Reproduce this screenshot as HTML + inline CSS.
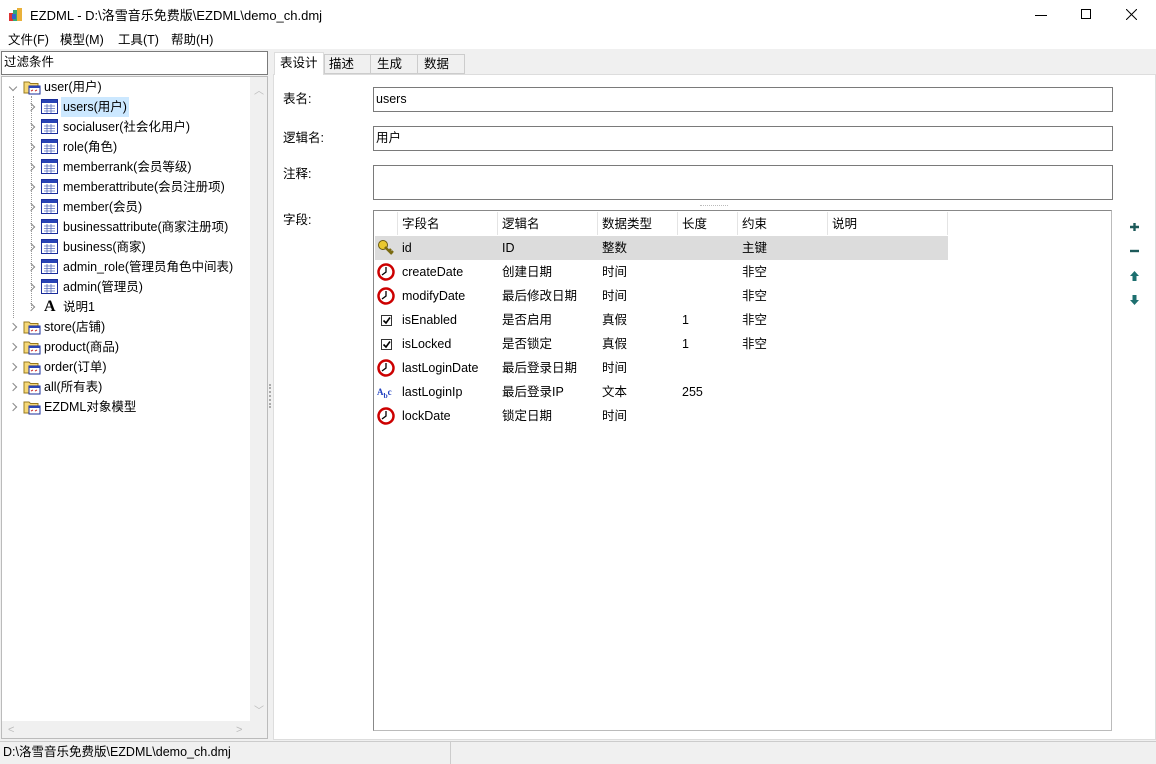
<!DOCTYPE html>
<html><head><meta charset="utf-8"><style>
*{margin:0;padding:0;box-sizing:border-box}
body{width:1156px;height:764px;background:#f0f0f0;font-family:"Liberation Sans","Noto Sans CJK SC",sans-serif;font-size:12.5px;color:#000;position:relative;overflow:hidden}
.a{position:absolute;white-space:nowrap;line-height:15px}
.tr{position:absolute;height:20px;line-height:20px;white-space:nowrap}
.ex{position:absolute;width:6px;height:6px;border-right:1.3px solid #888;border-bottom:1.3px solid #888}
.cell{position:absolute;height:24px;line-height:24px;white-space:nowrap}
</style></head><body>
<!-- title -->
<div class="a" style="left:0;top:0;width:1156px;height:49px;background:#fff"></div>
<svg class="a" style="left:9px;top:8px" width="14" height="14"><rect x="0" y="5" width="5" height="8" fill="#d33"/><rect x="4" y="2" width="5" height="11" fill="#3a7"/><rect x="8" y="0" width="5" height="13" fill="#e9b13a"/><rect x="3" y="6" width="4" height="5" fill="#36c"/></svg>
<div class="a" style="left:30px;top:8px;font-size:13px">EZDML - D:\洛雪音乐免费版\EZDML\demo_ch.dmj</div>
<div class="a" style="left:1035px;top:15px;width:12px;height:1px;background:#000"></div>
<div class="a" style="left:1081px;top:9px;width:10px;height:10px;border:1px solid #000"></div>
<svg class="a" style="left:1126px;top:9px" width="11" height="11"><path d="M0 0L11 11M11 0L0 11" stroke="#000" stroke-width="1"/></svg>
<div class="a" style="left:8px;top:33px;font-size:12.5px">文件(F)</div>
<div class="a" style="left:60px;top:33px">模型(M)</div>
<div class="a" style="left:118px;top:33px">工具(T)</div>
<div class="a" style="left:171px;top:33px">帮助(H)</div>
<!-- left -->
<div class="a" style="left:1px;top:51px;width:267px;height:24px;background:#fff;border:1px solid #7a7a7a"></div>
<div class="a" style="left:4px;top:55px">过滤条件</div>
<div class="a" style="left:1px;top:76px;width:267px;height:663px;background:#fff;border:1px solid #bbb"></div>
<div class="a" style="left:250px;top:77px;width:17px;height:644px;background:#f0f0f0"></div>
<div class="a" style="left:2px;top:721px;width:265px;height:17px;background:#f0f0f0"></div>
<div class="a" style="left:254px;top:84px;color:#bbb;font-size:10px">︿</div>
<div class="a" style="left:254px;top:704px;color:#bbb;font-size:10px">﹀</div>
<div class="a" style="left:8px;top:723px;color:#bbb;font-size:11px">&lt;</div>
<div class="a" style="left:236px;top:723px;color:#bbb;font-size:11px">&gt;</div>
<!-- dotted lines -->
<div class="a" style="left:13px;top:96px;height:222px;border-left:1px dotted #999"></div>
<div class="a" style="left:31px;top:96px;height:212px;border-left:1px dotted #999"></div>
<div id="tree"></div>
<!-- splitter -->
<div class="a" style="left:269px;top:384px;height:24px;border-left:2px dotted #aaa"></div>
<!-- right -->
<div class="a" style="left:273px;top:74px;width:883px;height:666px;background:#fff;border:1px solid #ddd"></div>
<div class="a" style="left:274px;top:52px;width:50px;height:23px;background:#fff;border:1px solid #ddd;border-bottom:none"></div>
<div class="a" style="left:280px;top:56px">表设计</div>
<div class="a" style="left:324px;top:54px;width:47px;height:20px;border:1px solid #ccc;background:#f0f0f0"></div>
<div class="a" style="left:329px;top:57px">描述</div>
<div class="a" style="left:370px;top:54px;width:48px;height:20px;border:1px solid #ccc;background:#f0f0f0"></div>
<div class="a" style="left:377px;top:57px">生成</div>
<div class="a" style="left:417px;top:54px;width:48px;height:20px;border:1px solid #ccc;background:#f0f0f0"></div>
<div class="a" style="left:424px;top:57px">数据</div>
<div class="a" style="left:283px;top:92px">表名:</div>
<div class="a" style="left:373px;top:87px;width:740px;height:25px;border:1px solid #7a7a7a"></div>
<div class="a" style="left:376px;top:92px">users</div>
<div class="a" style="left:283px;top:131px">逻辑名:</div>
<div class="a" style="left:373px;top:126px;width:740px;height:25px;border:1px solid #7a7a7a"></div>
<div class="a" style="left:376px;top:131px">用户</div>
<div class="a" style="left:283px;top:167px">注释:</div>
<div class="a" style="left:373px;top:165px;width:740px;height:35px;border:1px solid #7a7a7a"></div>
<div class="a" style="left:700px;top:205px;width:28px;border-top:1px dotted #bbb"></div>
<div class="a" style="left:283px;top:213px">字段:</div>
<div class="a" style="left:373px;top:210px;width:739px;height:521px;border:1px solid #888;border-right-color:#bbb;border-bottom-color:#bbb"></div>
<div class="a" style="left:375px;top:236px;width:573px;height:24px;background:#dcdcdc"></div>
<div id="grid"></div>
<svg class="a" style="left:1129px;top:221px" width="12" height="90">
<path d="M1 6H10M5.5 2V10" stroke="#1d5a5a" stroke-width="2.4"/>
<path d="M1 30H10" stroke="#1d5a5a" stroke-width="2.4"/>
<path d="M5.5 50L1 55H3.5V60H7.5V55H10Z" fill="#1d6f6f"/>
<path d="M5.5 84L1 79H3.5V74H7.5V79H10Z" fill="#1d6f6f"/>
</svg>
<!-- status -->
<div class="a" style="left:0;top:741px;width:1156px;height:23px;background:#f0f0f0;border-top:1px solid #ccc"></div>
<div class="a" style="left:450px;top:742px;height:22px;border-left:1px solid #ccc"></div>
<div class="a" style="left:3px;top:745px">D:\洛雪音乐免费版\EZDML\demo_ch.dmj</div>
<script>
var tbl='<svg width="17" height="15"><rect x="0.5" y="0.5" width="16" height="14" fill="#fff" stroke="#1a2d9a"/><rect x="1" y="1" width="15" height="3" fill="#2a45b5"/><path d="M3 7H14M3 9.5H14M3 12H14M6 5V14M10 5V14" stroke="#5a6fc0" stroke-width="0.8"/></svg>';
var fld='<svg width="18" height="16"><path d="M1 3H6L7.5 4.5H15V14H1Z" fill="#f5d878" stroke="#9a7b20"/><rect x="6" y="7" width="11" height="8" fill="#fff" stroke="#1a2d9a"/><rect x="6" y="7" width="11" height="2" fill="#2a45b5"/><path d="M8 12L10 11M12 12L14 11" stroke="#c33"/></svg>';
var T=document.getElementById('tree'),h='';
function row(y,lvl,ic,txt,sel){var ex=lvl?28:10,ix=lvl?41:23,tx=lvl?61:42;
h+='<div class="ex" style="left:'+ex+'px;top:'+(y-3)+'px;transform:rotate('+(y==87?45:-45)+'deg)"></div>';
h+='<div class="a" style="left:'+ix+'px;top:'+(y-8)+'px">'+ic+'</div>';
h+='<div class="tr" style="left:'+tx+'px;top:'+(y-10)+'px;padding:0 2px;'+(sel?'background:#cce8ff':'')+'">'+txt+'</div>';}
row(87,0,fld,'user(用户)');
var c=['users(用户)','socialuser(社会化用户)','role(角色)','memberrank(会员等级)','memberattribute(会员注册项)','member(会员)','businessattribute(商家注册项)','business(商家)','admin_role(管理员角色中间表)','admin(管理员)'];
c.forEach(function(t,i){row(107+20*i,1,tbl,t,i==0)});
row(307,1,'<span style="font-family:Liberation Serif;font-weight:bold;font-size:16px;line-height:16px;margin-left:3px">A</span>','说明1');
['store(店铺)','product(商品)','order(订单)','all(所有表)','EZDML对象模型'].forEach(function(t,i){row(327+20*i,0,fld,t)});
T.innerHTML=h;
var clk='<svg width="18" height="18"><circle cx="9" cy="9" r="7.5" fill="#fff" stroke="#c00" stroke-width="2.5"/><path d="M9 4V9L5 12" stroke="#000" stroke-width="1.3" fill="none"/></svg>';
var key='<svg width="18" height="18"><circle cx="6" cy="6" r="4.5" fill="#e9c830" stroke="#6a5a10"/><path d="M8 8L15 15M12 12L14 10M14 14L16 12" stroke="#7a6a10" stroke-width="2.5"/></svg>';
var chk='<svg width="18" height="18"><rect x="4.5" y="4.5" width="10" height="10" fill="#fff" stroke="#333"/><path d="M6.5 9.5L9 12L13 6.5" stroke="#000" stroke-width="1.6" fill="none"/></svg>';
var abc='<span style="font-size:9px;color:#2040c0;font-family:Liberation Serif;font-weight:bold;line-height:18px">A<sub>b</sub>c</span>';
var G=document.getElementById('grid'),g='';
var cx=[402,502,602,682,742,832];
['字段名','逻辑名','数据类型','长度','约束','说明'].forEach(function(t,i){g+='<div class="cell" style="left:'+cx[i]+'px;top:212px">'+t+'</div>'});
[397,497,597,677,737,827,947].forEach(function(x){g+='<div class="a" style="left:'+x+'px;top:212px;height:23px;border-left:1px solid #e4e4e4"></div>'});
var R=[[key,'id','ID','整数','','主键'],[clk,'createDate','创建日期','时间','','非空'],[clk,'modifyDate','最后修改日期','时间','','非空'],[chk,'isEnabled','是否启用','真假','1','非空'],[chk,'isLocked','是否锁定','真假','1','非空'],[clk,'lastLoginDate','最后登录日期','时间','',''],[abc,'lastLoginIp','最后登录IP','文本','255',''],[clk,'lockDate','锁定日期','时间','','']];
R.forEach(function(r,i){var y=236+24*i;g+='<div class="a" style="left:377px;top:'+(y+3)+'px">'+r[0]+'</div>';
for(var j=1;j<6;j++)g+='<div class="cell" style="left:'+cx[j-1]+'px;top:'+y+'px">'+r[j]+'</div>';});
G.innerHTML=g;
</script>
</body></html>
